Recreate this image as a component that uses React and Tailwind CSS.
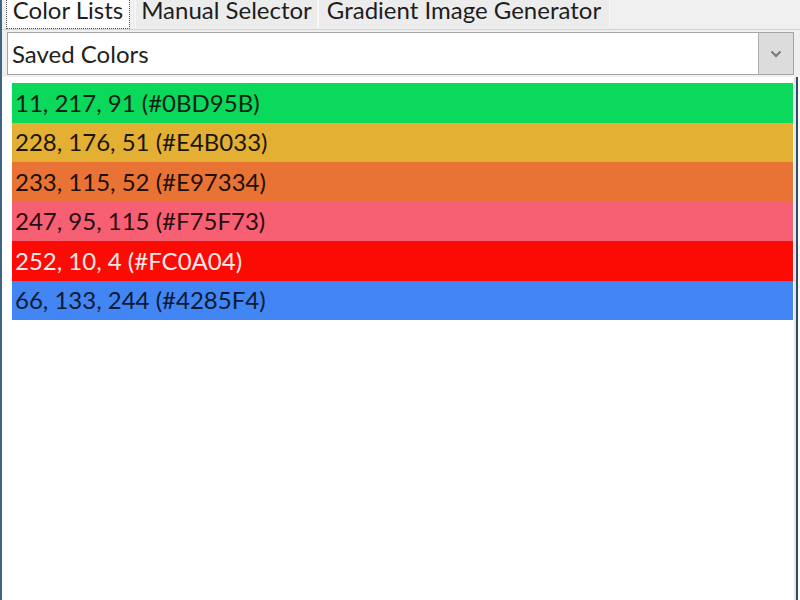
import React from 'react';

const colors = [
  { rgb: '11, 217, 91', hex: '#0BD95B', bg: 'bg-[#0bd95b]', text: 'text-[#0b1f14]' },
  { rgb: '228, 176, 51', hex: '#E4B033', bg: 'bg-[#e4b033]', text: 'text-[#1c1608]' },
  { rgb: '233, 115, 52', hex: '#E97334', bg: 'bg-[#e97334]', text: 'text-[#1c1008]' },
  { rgb: '247, 95, 115', hex: '#F75F73', bg: 'bg-[#f75f73]', text: 'text-[#2a0c12]' },
  { rgb: '252, 10, 4', hex: '#FC0A04', bg: 'bg-[#fc0a04]', text: 'text-[#fde8e8]' },
  { rgb: '66, 133, 244', hex: '#4285F4', bg: 'bg-[#4285f4]', text: 'text-[#0b1a33]' },
];

const Tab = ({ label, active, w }) => (
  <div
    className={`h-[28px] shrink-0 flex items-end justify-center leading-none whitespace-nowrap ${w} ${
      active ? 'bg-white' : 'bg-[#ececec] border-x border-[#f7f7f7]'
    }`}
  >
    <span
      className={`text-[24px] text-[#1e1e1e] pb-[6px] ${
        active ? 'outline-dotted outline-1 outline-[#555] px-[6px]' : ''
      }`}
    >
      {label}
    </span>
  </div>
);

export default function App() {
  return (
    <div
      className="w-[800px] h-[600px] bg-white flex overflow-hidden"
      style={{ fontFamily: 'Lato, "Noto Sans", sans-serif' }}
    >
      <div className="w-[2px] bg-[#3d6582]" />
      <div className="flex-1 flex flex-col">
        {/* tab strip */}
        <div className="h-[30px] bg-[#f0f0f0] flex items-start pl-[4px] border-b border-[#d2d2d2]">
          <Tab label="Color Lists" active w="w-[124px]" />
          <div className="w-[5px] shrink-0" />
          <Tab label="Manual Selector" w="w-[183px]" />
          <Tab label="Gradient Image Generator" w="w-[292px]" />
        </div>

        {/* combobox */}
        <div className="bg-[#f0f0f0] pl-[5px] pr-[6px] pt-[2px] pb-[2px]">
          <div className="h-[43px] flex border border-[#a5a5a5] bg-white">
            <div className="flex-1 flex items-center pl-[4px] text-[24px] text-[#222]">
              Saved Colors
            </div>
            <div className="w-[35px] bg-[#dcdcdc] border-l border-[#b0b0b0] flex items-center justify-center">
              <svg width="12" height="8" viewBox="0 0 12 8">
                <path d="M1.5 1.5 L6 6 L10.5 1.5" fill="none" stroke="#7a7a7a" strokeWidth="2" />
              </svg>
            </div>
          </div>
        </div>

        {/* list */}
        <div className="flex-1 flex">
          <div className="flex-1 pt-[6px] pl-[10px] pr-[1px]">
            <div className="flex flex-col">
              {colors.map((c) => (
                <div
                  key={c.hex}
                  className={`h-[39.5px] flex items-center pl-[3px] text-[24px] ${c.bg} ${c.text}`}
                >
                  {c.rgb} ({c.hex})
                </div>
              ))}
            </div>
          </div>
          <div className="w-[2px] bg-[#e4e4e4]" />
          <div className="w-[2px] bg-[#2f4f66]" />
          <div className="w-[2px] bg-white" />
        </div>
      </div>
    </div>
  );
}
